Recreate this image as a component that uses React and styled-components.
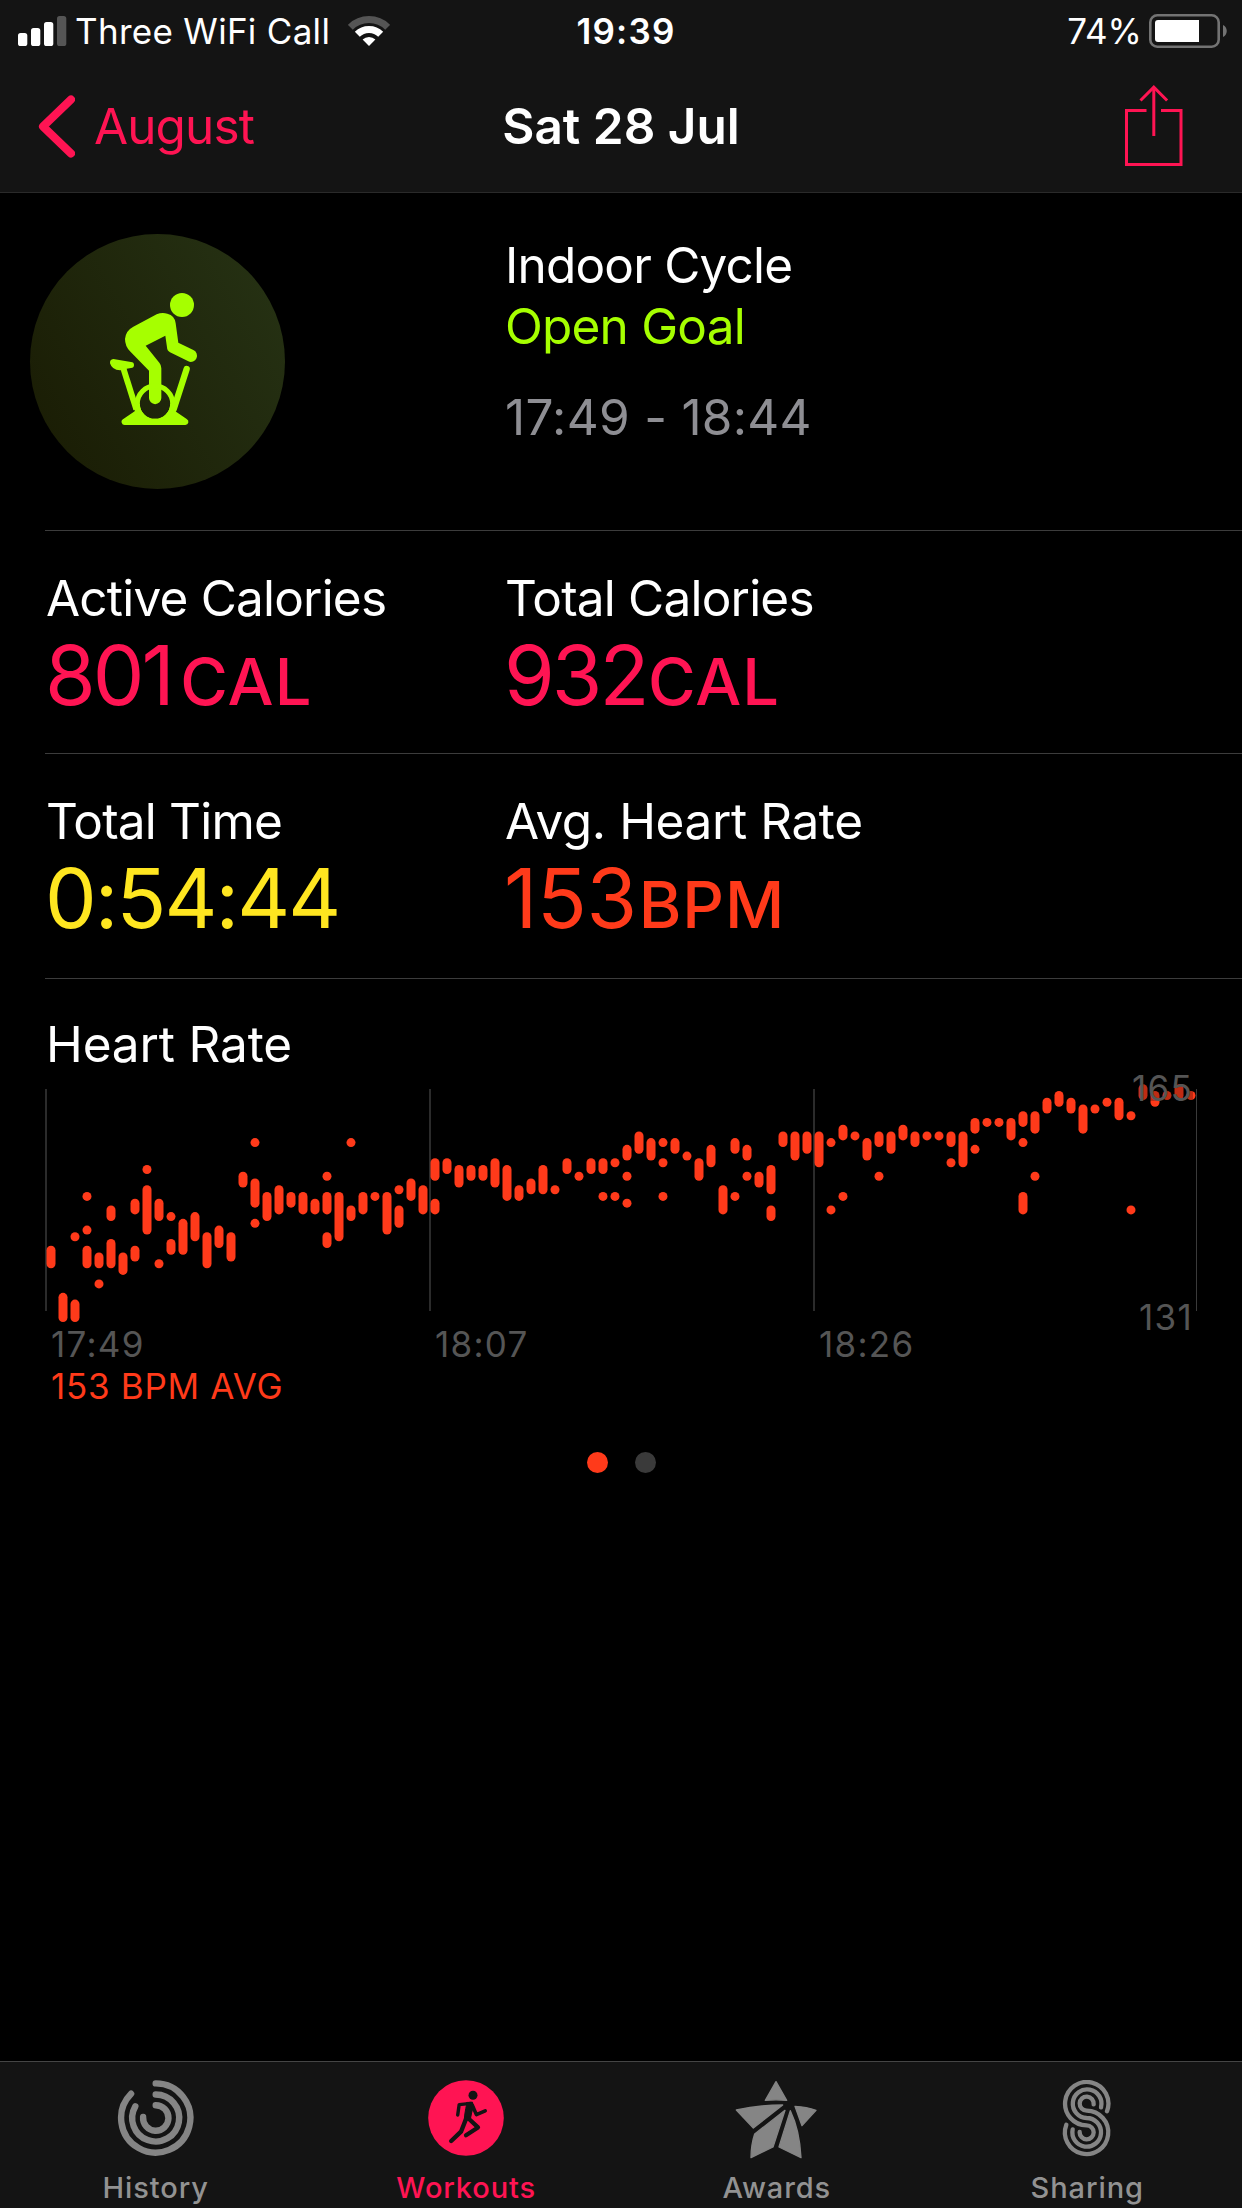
import React from 'react'
import styled, { createGlobalStyle } from 'styled-components'

const PINK = '#ff1453'
const RED = '#ff3a1a'
const GREY = '#858585'

// every column holds [highest, lowest] pairs, counted in beats below the maximum
const heartRate = [
    [[24, 26]], [[31, 34]], [[22, 22], [32, 34]], [[16, 16], [21, 21], [24, 26]], [[25, 26], [29, 29]],
    [[18, 19], [23, 26]], [[25, 27]], [[17, 18], [24, 25]], [[12, 12], [15, 21]], [[17, 19], [26, 26]],
    [[19, 19], [23, 24]], [[20, 24]], [[19, 22]], [[22, 26]], [[21, 23]],
    [[22, 25]], [[13, 14]], [[8, 8], [14, 17], [20, 20]], [[16, 19]], [[15, 18]],
    [[16, 17]], [[16, 18]], [[17, 18]], [[13, 13], [16, 18], [22, 23]], [[16, 22]],
    [[8, 8], [18, 19]], [[16, 18]], [[16, 16]], [[16, 21]], [[15, 15], [18, 20]],
    [[14, 16]], [[15, 18]], [[11, 13], [17, 18]], [[11, 12]], [[12, 14]],
    [[12, 13]], [[12, 13]], [[11, 14]], [[12, 16]], [[15, 16]],
    [[14, 15]], [[12, 15]], [[15, 15]], [[11, 12]], [[13, 13]],
    [[11, 12]], [[11, 12], [16, 16]], [[11, 11], [16, 16]], [[9, 10], [13, 13], [17, 17]], [[7, 9]],
    [[8, 10]], [[8, 8], [11, 11], [16, 16]], [[8, 9]], [[10, 10]], [[11, 13]],
    [[9, 11]], [[15, 18]], [[8, 9], [16, 16]], [[9, 10], [13, 13]], [[13, 14]],
    [[12, 15], [18, 19]], [[7, 8]], [[7, 10]], [[7, 9]], [[7, 11]],
    [[8, 8], [18, 18]], [[6, 7], [16, 16]], [[7, 7]], [[8, 10]], [[7, 8], [13, 13]],
    [[7, 9]], [[6, 7]], [[7, 8]], [[7, 7]], [[7, 7]],
    [[7, 8], [11, 11]], [[7, 11]], [[5, 6], [9, 9]], [[5, 5]], [[5, 5]],
    [[5, 7]], [[4, 5], [8, 8], [16, 18]], [[4, 6], [13, 13]], [[2, 3]], [[1, 2]],
    [[2, 3]], [[3, 6]], [[3, 3]], [[2, 2]], [[2, 4]],
    [[4, 4], [18, 18]], [[0, 1]], [[1, 2]], [[1, 1]], [[0, 1]],
    [[1, 1]]
]

const stats = [
    [
        { label: "Active Calories", value: "801", unit: "CAL", color: PINK, tracking: -3, gap: 8.5 },
        { label: "Total Calories", value: "932", unit: "CAL", color: PINK, tracking: -3, gap: 1.5 }
    ],
    [
        { label: "Total Time", value: "0:54:44", color: "#ffe620", tracking: -1.9 },
        { label: "Avg. Heart Rate", value: "153", unit: "BPM", color: RED, labelTracking: -0.4, tracking: -0.4, gap: 2 }
    ]
]

function SignalIcon() {
    return (
        <svg width="49" height="30" viewBox="0 0 49 30" fill="#fff">
            <rect x="0" y="17" width="9.3" height="13" rx="2.6" />
            <rect x="13" y="12" width="9.3" height="18" rx="2.6" />
            <rect x="26" y="6" width="9.3" height="24" rx="2.6" />
            <rect x="39" y="0" width="9.3" height="30" rx="2.6" fill="#555" />
        </svg>
    )
}

function WifiIcon() {
    return (
        <svg width="42" height="30" viewBox="0 0 42 30" fill="none" strokeWidth="7">
            <path d="M2.3 11.3A26.5 26.5 0 0 1 39.7 11.3" stroke="#555" />
            <path d="M9.3 18.3A16.5 16.5 0 0 1 32.7 18.3" stroke="#fff" />
            <path d="M21 30L14.6 23.6A9 9 0 0 1 27.4 23.6Z" fill="#fff" />
        </svg>
    )
}

function BatteryIcon() {
    return (
        <svg width="79" height="34" viewBox="0 0 79 34">
            <rect x="1.3" y="1.3" width="68.4" height="31.4" rx="7" fill="none" stroke="#737373" strokeWidth="2.6" />
            <rect x="6" y="6" width="44" height="22" rx="3" fill="#fff" />
            <rect x="46" y="6" width="4" height="22" fill="#fff" />
            <path d="M74 11C79 13 79 21 74 23Z" fill="#737373" />
        </svg>
    )
}

function ChevronIcon() {
    return (
        <svg width="38" height="63" viewBox="0 0 38 63" fill="none" stroke={PINK} strokeWidth="8" strokeLinecap="round" strokeLinejoin="round">
            <path d="M34 4.5L6 31.5L34 58.5" />
        </svg>
    )
}

function ShareIcon() {
    return (
        <svg width="58" height="82" viewBox="0 0 58 82" fill="none" stroke={PINK} strokeWidth="3">
            <path d="M21.5 25.5H1.5V79.5H56V25.5H36" />
            <path d="M28.8 51V3" />
            <path d="M15.5 15.5L28.8 2.2L42.1 15.5" />
        </svg>
    )
}

function IndoorCycleIcon() {
    return (
        <svg viewBox="30 42 765 765" width="255" height="255" fill="#a6ff00">
            <circle cx="486" cy="255" r="36" />
            <path d="M410 283Q426 276 442 281Q465 287 467 310L475 368L520 390A18 18 0 0 1 505 424L450 397Q441 392 441 382L436 347L377 377L418 428Q424 435 424 445V534A18.5 18.5 0 0 1 387 534V452L330 394Q315 378 315 357Q317 332 340 320Z" />
            <path d="M280 417L333 426A9 9 0 0 1 333 444L320 446L318 451H300Q276 450 270 430Q269 418 280 417Z" />
            <path d="M311 448L349 568" fill="none" stroke="#a6ff00" strokeWidth="18" />
            <path d="M500 447L461 568" fill="none" stroke="#a6ff00" strokeWidth="19" strokeLinecap="round" />
            <circle cx="405" cy="551" r="53" fill="none" stroke="#a6ff00" strokeWidth="15" />
            <path d="M345 551L344 574L310 597A9.5 9.5 0 0 0 315 615H496A9.5 9.5 0 0 0 500 597L466 574L465 551H450.5A45.5 45.5 0 0 1 359.5 551Z" />
        </svg>
    )
}

function HistoryIcon() {
    return (
        <svg width="84" height="80" viewBox="-42.7 -38 84 80" fill="none" stroke={GREY} strokeWidth="6.4" strokeLinecap="round">
            <path d="M0 -34.6A34.6 34.6 0 1 1 -24.6 -24.3" />
            <path d="M0 -23.5A23.5 23.5 0 1 1 -20.4 -11.7" />
            <path d="M0 -12.7A12.7 12.7 0 1 1 -12.6 -1" />
        </svg>
    )
}

function WorkoutsIcon() {
    return (
        <svg width="84" height="80" viewBox="-42 -38 84 80" fill="none" stroke="#141414" strokeLinecap="round" strokeLinejoin="round">
            <circle r="37.8" fill={PINK} stroke="none" />
            <circle cx="7" cy="-22.7" r="4.5" fill="#141414" stroke="none" />
            <path d="M5 -14.6L-6.8 -13.4L-8.3 -3" strokeWidth="3.4" />
            <path d="M1 -15.5L6.5 -15.8Q8 -12 5.6 -5L4.4 1L-1.6 3.4Q-2 -2 1 -15.5Z" fill="#141414" strokeWidth="1" />
            <path d="M6.2 -13L10.4 -3.4L19.2 -7.2" strokeWidth="3.6" />
            <path d="M2.5 0.5L12 9.4L0 17.3" strokeWidth="4.2" />
            <path d="M0 1L-5 13.7L-14.8 23" strokeWidth="4.4" />
        </svg>
    )
}

function AwardsIcon() {
    return (
        <svg width="84" height="80" viewBox="162 90 252 240" fill={GREY} stroke={GREY} strokeWidth="4" strokeLinejoin="round">
            <path d="M288 95L320 151Q288 148 256 151Z" />
            <path d="M169 180Q235 165 308 165L220 234Z" />
            <path d="M345 169Q380 171 408 181L366 227Z" />
            <path d="M315 181L279 291L213 323Q213 285 224 252Z" />
            <path d="M331 182Q359 240 363 323L297 291Z" />
        </svg>
    )
}

function SharingIcon() {
    return (
        <svg width="84" height="80" viewBox="1093 90 252 240" fill="none" stroke={GREY} strokeWidth="13" strokeLinecap="round">
            <path d="M1279 184A65 65 0 1 0 1218 226A21 21 0 1 1 1197 246" />
            <path d="M1261 172A43 43 0 1 0 1218 204A43 43 0 1 1 1176 238" />
            <path d="M1239 163A21 21 0 1 0 1218 182A65 65 0 1 1 1157 224" />
        </svg>
    )
}

function HeartChart() {
    const y = (n) => 14.8 + n * 6.727
    return (
        <Plot>
            <svg width="1160" height="249" viewBox="0 0 1160 249">
                {[1, 385, 769].map((x) => <rect key={x} x={x - 1} y="15" width="2" height="222" fill="#2b2b2b" />)}
                <rect x="1151" y="15" width="1" height="222" fill="#3a3a3a" />
                {
                    heartRate.map((column, i) => column.map(([high, low]) => (
                        <rect key={`${i}-${high}`} x={1.5 + i * 12} y={y(high) - 4.5} width="9" height={y(low) - y(high) + 9} rx="4.5" fill={RED} />
                    )))
                }
            </svg>
            <MaxLabel>165</MaxLabel>
            <MinLabel>131</MinLabel>
        </Plot>
    )
}

const tabs = [
    { name: "History", icon: <HistoryIcon /> },
    { name: "Workouts", icon: <WorkoutsIcon />, active: true },
    { name: "Awards", icon: <AwardsIcon /> },
    { name: "Sharing", icon: <SharingIcon /> }
]

function App() {
    return (
        <Screen>
            <GlobalStyle />
            <Header>
                <StatusBar>
                    <Carrier>
                        <SignalIcon />
                        <span>Three WiFi Call</span>
                        <WifiIcon />
                    </Carrier>
                    <Clock>19:39</Clock>
                    <Battery>
                        <span>74%</span>
                        <BatteryIcon />
                    </Battery>
                </StatusBar>
                <NavBar>
                    <BackButton>
                        <ChevronIcon />
                        <span>August</span>
                    </BackButton>
                    <Title>Sat 28 Jul</Title>
                    <ShareButton aria-label="Share"><ShareIcon /></ShareButton>
                </NavBar>
            </Header>
            <Main>
                <Summary>
                    <Badge><IndoorCycleIcon /></Badge>
                    <Details>
                        <Activity>Indoor Cycle</Activity>
                        <Goal>Open Goal</Goal>
                        <Period>17:49 - 18:44</Period>
                    </Details>
                </Summary>
                {
                    stats.map((row, i) => (
                        <StatRow key={i} $height={i === 0 ? 223 : 225}>
                            {
                                row.map(({ label, value, unit, color, labelTracking, tracking, gap }) => (
                                    <div key={label}>
                                        <StatLabel $tracking={labelTracking}>{label}</StatLabel>
                                        <StatValue $color={color} $tracking={tracking}>{value}{unit && <Unit $gap={gap}>{unit}</Unit>}</StatValue>
                                    </div>
                                ))
                            }
                        </StatRow>
                    ))
                }
                <HeartSection>
                    <StatLabel $tracking={-0.15}>Heart Rate</StatLabel>
                    <HeartChart />
                    <TimeAxis>
                        <span>17:49</span>
                        <span>18:07</span>
                        <span>18:26</span>
                    </TimeAxis>
                    <Average>153 BPM AVG</Average>
                </HeartSection>
                <Pager>
                    <Dot $active />
                    <Dot />
                </Pager>
            </Main>
            <TabBar>
                {
                    tabs.map(({ name, icon, active }) => (
                        <Tab key={name} $active={active}>
                            {icon}
                            <span>{name}</span>
                        </Tab>
                    ))
                }
            </TabBar>
        </Screen>
    )
}

export default App

const GlobalStyle = createGlobalStyle`
    body{
        margin:0;
        background:#000;
    }
    *{
        box-sizing:border-box;
    }
    svg{
        display:block;
        flex-shrink:0;
    }
    button{
        background:none;
        border:none;
        padding:0;
        font:inherit;
    }
`

const Screen = styled.div`
    width:1242px;
    height:2208px;
    display:flex;
    flex-direction:column;
    overflow:hidden;
    background:#000;
    color:#fff;
    font-family:Inter, Roboto, "Liberation Sans", sans-serif;
    font-size:49.5px;
    line-height:60px;
    white-space:nowrap;
`

const Header = styled.header`
    height:193px;
    background:#141414;
    border-bottom:1px solid #2a2a2a;
`

const StatusBar = styled.div`
    height:62px;
    display:grid;
    grid-template-columns:1fr auto 1fr;
    align-items:center;
    padding:0 14px 0 18px;
    font-size:35px;
`

const Carrier = styled.div`
    display:flex;
    align-items:center;
    letter-spacing:0.3px;
    span{
        margin:0 18px 0 8px;
    }
`

const Clock = styled.div`
    padding-left:6px;
    font-weight:600;
    letter-spacing:1.2px;
`

const Battery = styled.div`
    display:flex;
    align-items:center;
    justify-content:flex-end;
    gap:7px;
`

const NavBar = styled.nav`
    height:128px;
    display:grid;
    grid-template-columns:1fr auto 1fr;
    align-items:center;
    padding:0 37px;
`

const BackButton = styled.button`
    display:flex;
    align-items:center;
    gap:19px;
    color:${PINK};
    letter-spacing:-0.9px;
`

const Title = styled.h1`
    margin:0;
    font-size:49.5px;
    font-weight:600;
`

const ShareButton = styled.button`
    justify-self:end;
    margin-right:22px;
`

const Main = styled.main`
    flex:1;
`

const Summary = styled.section`
    display:grid;
    grid-template-columns:475px 1fr;
    padding:41px 0 41px 30px;
    line-height:61px;
`

const Badge = styled.div`
    width:255px;
    height:255px;
    border-radius:50%;
    background:linear-gradient(60deg, #191b03 0%, #263214 95%);
`

const Details = styled.div`
    padding-top:1px;
    letter-spacing:-0.8px;
`

const Activity = styled.div`
    color:#fff;
`

const Goal = styled.div`
    color:#a6ff00;
`

const Period = styled.div`
    margin-top:30px;
    letter-spacing:0.3px;
    color:#8e8e93;
`

const StatRow = styled.section`
    display:grid;
    grid-template-columns:459px 1fr;
    height:${(props) => props.$height}px;
    margin-left:45px;
    padding-top:37px;
    border-top:1px solid #3c3c3c;
`

const StatLabel = styled.div`
    padding-left:1px;
    letter-spacing:${(props) => props.$tracking ?? -0.8}px;
`

const StatValue = styled.div`
    font-size:82px;
    line-height:96px;
    letter-spacing:${(props) => props.$tracking}px;
    color:${(props) => props.$color};
`

const Unit = styled.span`
    margin-left:${(props) => props.$gap}px;
    font-size:65px;
    font-weight:500;
    letter-spacing:1px;
`

const HeartSection = styled.section`
    margin-left:45px;
    padding-top:35px;
    border-top:1px solid #3c3c3c;
`

const Plot = styled.div`
    position:relative;
    height:249px;
`

const PlotLabel = styled.span`
    position:absolute;
    right:49px;
    font-size:35px;
    line-height:42px;
    letter-spacing:1.3px;
    color:#555;
`

const MaxLabel = styled(PlotLabel)`
    top:-7px;
    height:34px;
    background:rgba(0, 0, 0, 0.25);
`

const MinLabel = styled(PlotLabel)`
    top:222px;
`

const TimeAxis = styled.div`
    display:grid;
    grid-template-columns:384px 384px 1fr;
    padding-left:6px;
    font-size:35px;
    line-height:42px;
    letter-spacing:1.3px;
    color:#555;
`

const Average = styled.div`
    padding-left:6px;
    font-size:35px;
    line-height:42px;
    letter-spacing:0.7px;
    color:${RED};
`

const Pager = styled.div`
    display:flex;
    justify-content:center;
    gap:27px;
    margin-top:45px;
`

const Dot = styled.span`
    width:21px;
    height:21px;
    border-radius:50%;
    background:${(props) => (props.$active ? RED : "#3a3a3a")};
`

const TabBar = styled.nav`
    display:grid;
    grid-template-columns:repeat(4, 1fr);
    height:147px;
    padding-top:18px;
    background:#141414;
    border-top:1px solid #454545;
`

const Tab = styled.div`
    display:flex;
    flex-direction:column;
    align-items:center;
    gap:11px;
    font-size:29px;
    font-weight:500;
    line-height:34px;
    letter-spacing:0.9px;
    color:${(props) => (props.$active ? PINK : "#929292")};
    span{
        padding-left:1px;
    }
`
